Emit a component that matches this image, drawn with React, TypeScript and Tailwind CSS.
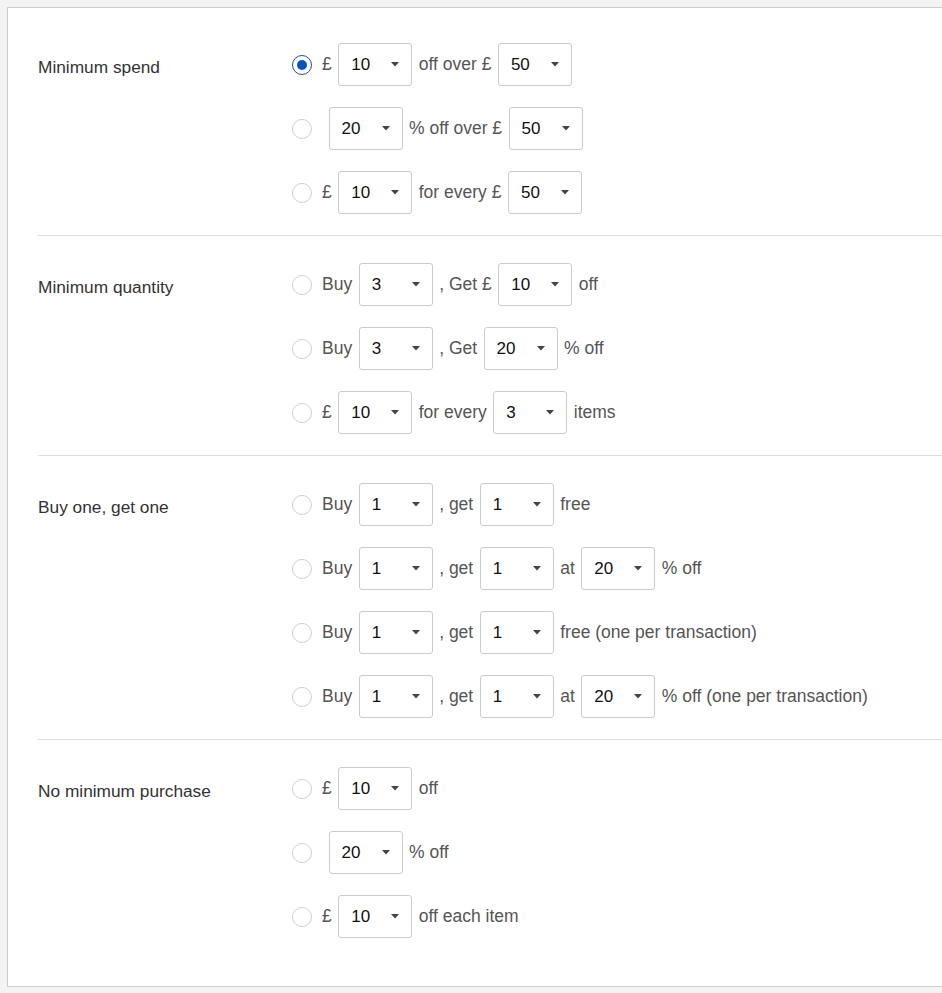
import React from "react";

type Part = { t: "text"; v: string } | { t: "sel"; v: string };

const txt = (v: string): Part => ({ t: "text", v });
const sel = (v: string): Part => ({ t: "sel", v });

const sections: { label: string; rows: Part[][] }[] = [
  {
    label: "Minimum spend",
    rows: [
      [txt("£"), sel("10"), txt("off over £"), sel("50")],
      [txt(""), sel("20"), txt("% off over £"), sel("50")],
      [txt("£"), sel("10"), txt("for every £"), sel("50")],
    ],
  },
  {
    label: "Minimum quantity",
    rows: [
      [txt("Buy"), sel("3"), txt(", Get £"), sel("10"), txt("off")],
      [txt("Buy"), sel("3"), txt(", Get"), sel("20"), txt("% off")],
      [txt("£"), sel("10"), txt("for every"), sel("3"), txt("items")],
    ],
  },
  {
    label: "Buy one, get one",
    rows: [
      [txt("Buy"), sel("1"), txt(", get"), sel("1"), txt("free")],
      [txt("Buy"), sel("1"), txt(", get"), sel("1"), txt("at"), sel("20"), txt("% off")],
      [txt("Buy"), sel("1"), txt(", get"), sel("1"), txt("free (one per transaction)")],
      [txt("Buy"), sel("1"), txt(", get"), sel("1"), txt("at"), sel("20"), txt("% off (one per transaction)")],
    ],
  },
  {
    label: "No minimum purchase",
    rows: [
      [txt("£"), sel("10"), txt("off")],
      [txt(""), sel("20"), txt("% off")],
      [txt("£"), sel("10"), txt("off each item")],
    ],
  },
];

function Radio({ checked }: { checked: boolean }) {
  return (
    <span
      className={`w-[20px] h-[20px] rounded-full border flex items-center justify-center shrink-0 mr-[3.5px] bg-white ${
        checked ? "border-[#1a4fa6] border-[1.5px]" : "border-[#cfcfcf]"
      }`}
    >
      {checked && <span className="w-[10px] h-[10px] rounded-full bg-[#0654ba]" />}
    </span>
  );
}

function Select({ value }: { value: string }) {
  return (
    <div className="w-[74px] h-[43px] border border-[#cccccc] rounded-[3px] bg-white flex items-center justify-between pl-[12px] pr-[12px] shrink-0 text-[#111] text-[17px]">
      <span>{value}</span>
      <svg width="8" height="5" viewBox="0 0 8 5">
        <path d="M0 0 H8 L4 4.5 Z" fill="#444" />
      </svg>
    </div>
  );
}

export default function App() {
  return (
    <div
      className="min-h-screen bg-[#f3f3f3] overflow-hidden pt-[7px] pb-[7px] pl-[7px]"
      style={{ fontFamily: '"Liberation Sans", Arial, sans-serif' }}
    >
      <div className="w-[1000px] bg-white border border-[#cccccc] pt-[8px] pb-[27px] pl-[30px]">
        {sections.map((s, si) => (
          <div
            key={s.label}
            className={`flex pt-[27px] ${si < sections.length - 1 ? "border-b border-[#dddddd]" : ""}`}
          >
            <div className="w-[254px] shrink-0 mt-[12px] text-[17.3px] leading-[24px] text-[#333]">
              {s.label}
            </div>
            <div className="flex flex-col">
              {s.rows.map((row, ri) => (
                <div key={ri} className="flex items-center h-[43px] mb-[21px]">
                  <Radio checked={si === 0 && ri === 0} />
                  {row.map((p, pi) =>
                    p.t === "sel" ? (
                      <Select key={pi} value={p.v} />
                    ) : (
                      <span key={pi} className="mx-[6.5px] text-[17.5px] text-[#555] whitespace-nowrap">
                        {p.v}
                      </span>
                    )
                  )}
                </div>
              ))}
            </div>
          </div>
        ))}
      </div>
    </div>
  );
}
